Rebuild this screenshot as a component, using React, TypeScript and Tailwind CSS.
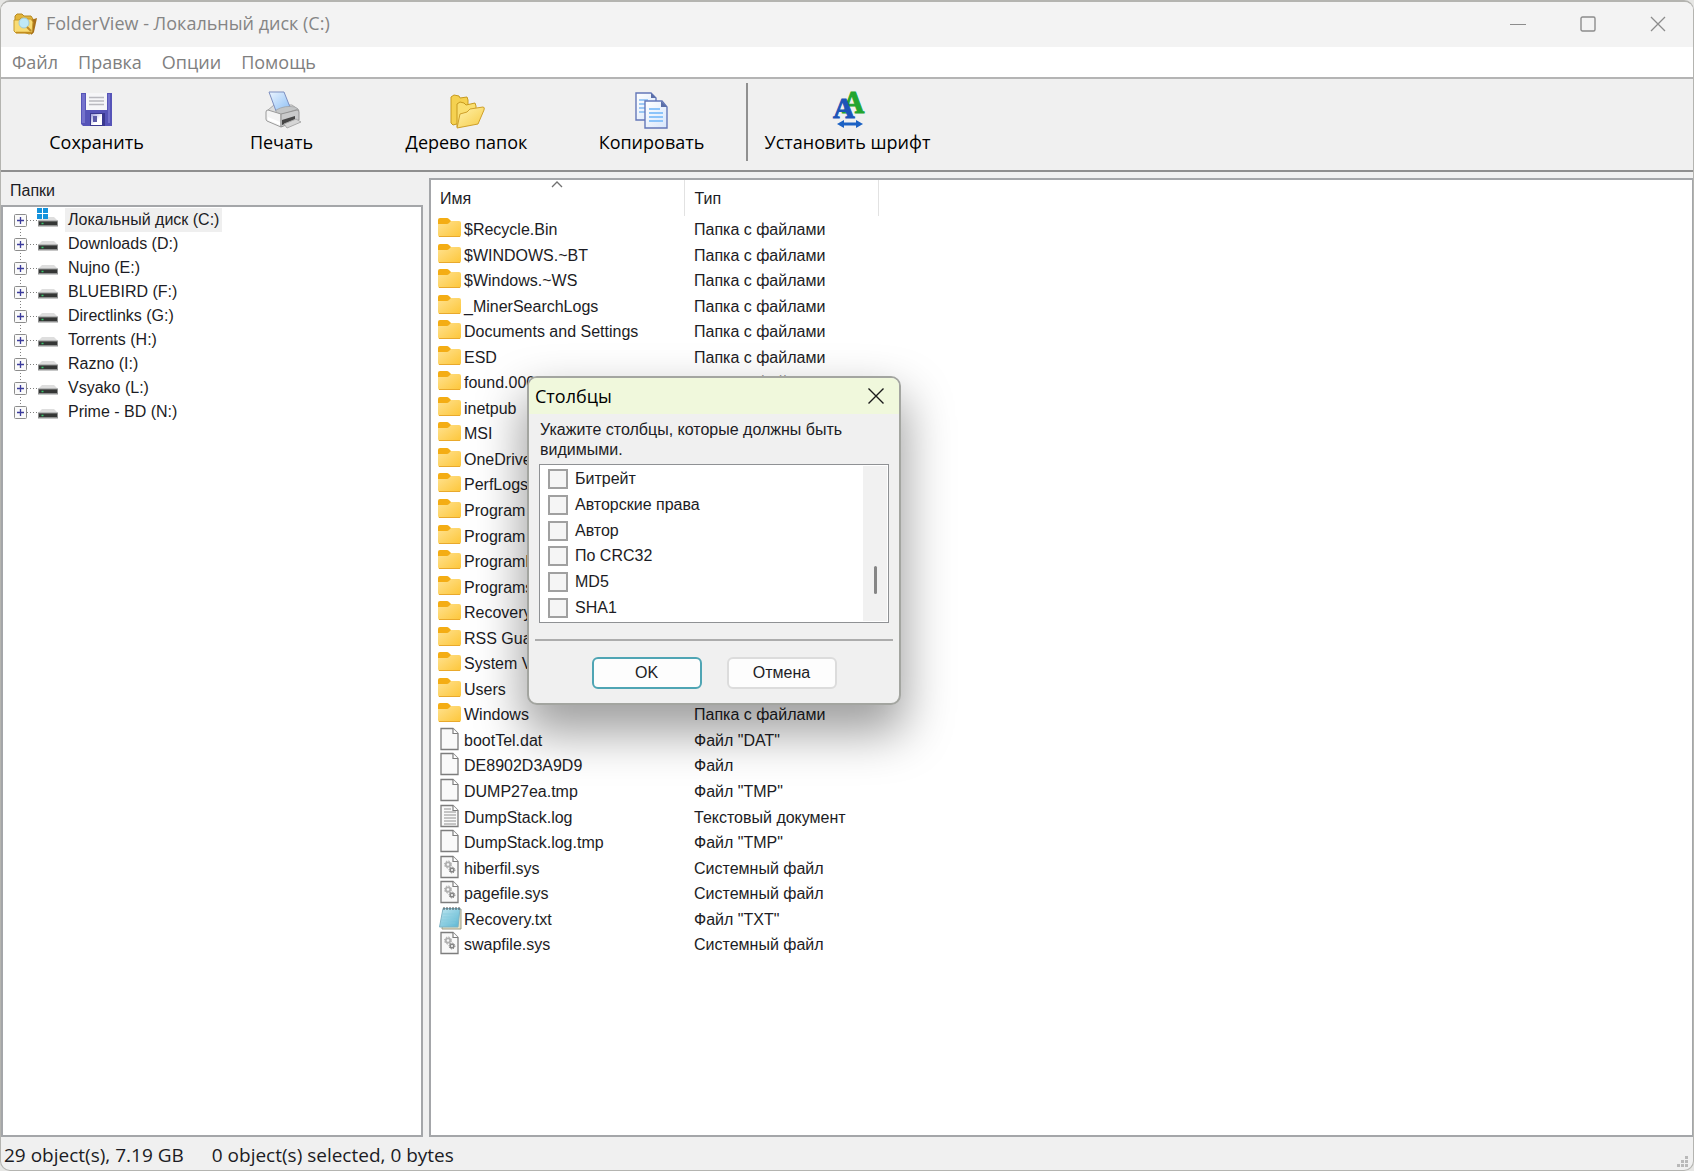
import type { ReactNode } from "react";

const drives = [
  "Локальный диск (C:)",
  "Downloads (D:)",
  "Nujno (E:)",
  "BLUEBIRD (F:)",
  "Directlinks (G:)",
  "Torrents (H:)",
  "Razno (I:)",
  "Vsyako (L:)",
  "Prime - BD (N:)",
];

type Kind = "folder" | "blank" | "log" | "sys" | "txt";

const FOLDER = "Папка с файлами";
const SYSTEM = "Системный файл";

const files: { name: string; type: string; kind: Kind }[] = [
  { name: "$Recycle.Bin", type: FOLDER, kind: "folder" },
  { name: "$WINDOWS.~BT", type: FOLDER, kind: "folder" },
  { name: "$Windows.~WS", type: FOLDER, kind: "folder" },
  { name: "_MinerSearchLogs", type: FOLDER, kind: "folder" },
  { name: "Documents and Settings", type: FOLDER, kind: "folder" },
  { name: "ESD", type: FOLDER, kind: "folder" },
  { name: "found.000", type: FOLDER, kind: "folder" },
  { name: "inetpub", type: FOLDER, kind: "folder" },
  { name: "MSI", type: FOLDER, kind: "folder" },
  { name: "OneDriveTemp", type: FOLDER, kind: "folder" },
  { name: "PerfLogs", type: FOLDER, kind: "folder" },
  { name: "Program Files", type: FOLDER, kind: "folder" },
  { name: "Program Files (x86)", type: FOLDER, kind: "folder" },
  { name: "ProgramData", type: FOLDER, kind: "folder" },
  { name: "Programs", type: FOLDER, kind: "folder" },
  { name: "Recovery", type: FOLDER, kind: "folder" },
  { name: "RSS Guard", type: FOLDER, kind: "folder" },
  { name: "System Volume Information", type: FOLDER, kind: "folder" },
  { name: "Users", type: FOLDER, kind: "folder" },
  { name: "Windows", type: FOLDER, kind: "folder" },
  { name: "bootTel.dat", type: 'Файл "DAT"', kind: "blank" },
  { name: "DE8902D3A9D9", type: "Файл", kind: "blank" },
  { name: "DUMP27ea.tmp", type: 'Файл "TMP"', kind: "blank" },
  { name: "DumpStack.log", type: "Текстовый документ", kind: "log" },
  { name: "DumpStack.log.tmp", type: 'Файл "TMP"', kind: "blank" },
  { name: "hiberfil.sys", type: SYSTEM, kind: "sys" },
  { name: "pagefile.sys", type: SYSTEM, kind: "sys" },
  { name: "Recovery.txt", type: 'Файл "TXT"', kind: "txt" },
  { name: "swapfile.sys", type: SYSTEM, kind: "sys" },
];

const columns = ["Битрейт", "Авторские права", "Автор", "По CRC32", "MD5", "SHA1"];

const FileIcon = ({ kind }: { kind: Kind }) => {
  if (kind === "folder") {
    return (
      <svg width="26" height="24" viewBox="0 0 26 24" className="shrink-0">
        <path d="M1 4q0-2 2-2h7q1 0 2 1l2 2v5H1z" fill="#f4ad14" />
        <path d="M1 8h9q1 0 2-1l2-2h8q2 0 2 2v12q0 2-2 2H3q-2 0-2-2z" fill="url(#folderFill)" />
        <path d="M2 20.500h21" stroke="#e9a92c" />
      </svg>
    );
  }
  if (kind === "txt") {
    return (
      <svg width="26" height="24" viewBox="0 0 26 24" className="shrink-0">
        <path d="M7 3h17v20H5z" fill="#e8e2c4" stroke="#9c9c88" />
        <path d="M6 2.500h17l-2 18.500H2.500z" fill="url(#noteFill)" stroke="#7fb3c4" />
        <path d="M6 8h14M5.500 11h14M5 14h14M4.500 17h14" stroke="#86cbdd" strokeWidth="0.700" />
        <path d="M7 1v3M10 1v3M13 1v3M16 1v3M19 1v3M22 1v3" stroke="#4d5558" />
      </svg>
    );
  }
  return (
    <svg width="26" height="24" viewBox="0 0 26 24" className="shrink-0">
      <path d="M4 1.500h12l5 5v16H4z" fill="#f9f9f9" stroke="#7d7d7d" strokeWidth="1.300" />
      <path d="M16 1.500v5h5" fill="#fff" stroke="#7d7d7d" strokeWidth="1.200" />
      {kind === "log" && (
        <path d="M7 5h7M7 8h12M7 11h12M7 14h12M7 17h12M7 20h12" stroke="#909090" />
      )}
      {kind === "sys" && (
        <g fill="none">
          <circle cx="11" cy="9.500" r="2.200" stroke="#b0b0b0" strokeWidth="1.800" />
          <circle cx="11" cy="9.500" r="3.500" stroke="#a0a0a0" strokeDasharray="1.400 1.350" />
          <circle cx="15" cy="15" r="1.800" stroke="#858585" strokeWidth="1.500" />
          <circle cx="15" cy="15" r="2.900" stroke="#808080" strokeDasharray="1.200 1.080" />
        </g>
      )}
    </svg>
  );
};

const DriveIcon = ({ system }: { system?: boolean }) => (
  <svg width="22" height="24" viewBox="0 0 22 24" className="shrink-0">
    <path d="M5 9h12l4 4H1z" fill="#dedede" />
    <path d="M1 12.500h20v6H1z" fill="#8f9090" />
    <path d="M2 13.500h18v3.500H2z" fill="#343635" />
    <path d="M4.500 15.500h2" stroke="#35c46a" strokeWidth="1.500" />
    {system && (
      <>
        <path d="M0 0h11v11H0z" fill="#fff" />
        <path d="M0 0h5v5H0zM6 0h5v5H6zM0 6h5v5H0zM6 6h5v5H6z" fill="#1492dc" />
      </>
    )}
  </svg>
);

const TreeToggle = ({ first, last }: { first: boolean; last: boolean }) => (
  <svg width="25" height="24" viewBox="0 0 25 24">
    <path
      d={`M8.500 ${first ? 12 : 0}V${last ? 12 : 24}`}
      stroke="#808080"
      strokeDasharray="1 2"
    />
    <path d="M15 12.500h10" stroke="#808080" strokeDasharray="1 2" />
    <rect x="2.500" y="6.500" width="12" height="12" rx="1" fill="#fafafa" stroke="#8c8c8c" />
    <path d="M5 12.500h7M8.500 9v7" stroke="#3c3c9c" strokeWidth="1.300" />
  </svg>
);

const SaveIcon = () => (
  <svg width="40" height="40" viewBox="0 0 40 40">
    <path d="M4 3h31v33H6l-2-2z" fill="#5654b8" />
    <path d="M5 4h3v29H5zM31 4h2v29h-2z" fill="#7472cc" />
    <path d="M9 3h21v17H9z" fill="#f6f6f8" />
    <path d="M12 7.500h15M12 11h15M12 14.500h15" stroke="#b9b9bf" strokeWidth="1.400" />
    <path d="M13 23h15v13H13z" fill="#3a3990" />
    <path d="M14 24h11v11H14z" fill="url(#shutterFill)" />
    <path d="M16 26h4v6h-4z" fill="#5b5aa8" />
  </svg>
);

const PrintIcon = () => (
  <svg width="40" height="40" viewBox="0 0 40 40" strokeLinejoin="round">
    <path d="M6 20l6-5h18l7 5-3 6-16 5-12-5z" fill="#dcdddd" stroke="#a9a9a9" />
    <path d="M7 2h15l6 15q-7 1-14 4z" fill="url(#paperFill)" stroke="#7d8fc0" />
    <path d="M14 20q9-5 19-3l3 2-17 6-5-2z" fill="#c3c5c6" stroke="#9c9e9f" strokeWidth="0.700" />
    <path d="M4 22q0-2 2-2l13 4v13L5 31q-1-1-1-2z" fill="#f4f4f4" stroke="#9a9a9a" />
    <path d="M19 24l16-4q2 0 2 2v8l-18 7z" fill="#c9cacb" stroke="#929292" />
    <path d="M6 27l12 5v3L6 30z" fill="#fff" />
    <path d="M20 30l13-4v4l-13 5z" fill="#454545" />
    <path d="M22 34l12-5 5 3-14 6z" fill="#d6d6d6" stroke="#aaa" />
  </svg>
);

const FoldersIcon = () => (
  <svg width="40" height="40" viewBox="0 0 40 40" strokeLinejoin="round">
    <path d="M4 33V7l3-2 5 1 1 2 7-1 1 3v21L6 35z" fill="#f5d150" stroke="#c79a1f" />
    <path d="M10 37V14l3-2 4 1 2 2 9-2 1 3v17z" fill="#fadf70" stroke="#c79a1f" />
    <path d="M10 38l3-14 7-2 3-3 13-2q2 0 1 3l-6 14z" fill="url(#openFill)" stroke="#cfa02a" />
  </svg>
);

const CopyIcon = () => (
  <svg width="40" height="40" viewBox="0 0 40 40">
    <path d="M4 3h15l5 5v22H4z" fill="url(#sheetFill)" stroke="#6377b8" strokeWidth="1.400" />
    <path d="M7 10h9M7 14h6M7 18h6M7 22h6" stroke="#82baf2" strokeWidth="1.500" />
    <path d="M19 3v5h5z" fill="#5b6fa8" />
    <path d="M13 11h17l5 6v21H13z" fill="url(#sheetFill)" stroke="#6377b8" strokeWidth="1.400" />
    <path d="M17 19h11M17 23h14M17 27h14M17 31h14" stroke="#8cc4fa" strokeWidth="1.800" />
    <path d="M29 11v6h6z" fill="#5b6fa8" />
  </svg>
);

const FontIcon = () => (
  <svg width="40" height="40" viewBox="0 0 40 40">
    <g fontFamily="Liberation Serif, serif" fontWeight="700" strokeWidth="1">
      <text x="14" y="23" fontSize="31" fill="#22a52e" stroke="#22a52e">A</text>
      <text x="5" y="28" fontSize="30" fill="#1d55b8" stroke="#1d55b8">A</text>
    </g>
    <path d="M9 34l7-4v2.500h12V30l7 4-7 4v-2.500H16V38z" fill="#1c62c4" />
  </svg>
);

const tools: { label: string; icon: ReactNode }[] = [
  { label: "Сохранить", icon: <SaveIcon /> },
  { label: "Печать", icon: <PrintIcon /> },
  { label: "Дерево папок", icon: <FoldersIcon /> },
  { label: "Копировать", icon: <CopyIcon /> },
];

const ToolButton = ({ label, icon }: { label: string; icon: ReactNode }) => (
  <button type="button" className="flex w-[185px] flex-col items-center pt-[7px]">
    {icon}
    <span className="text-[18px] leading-6 whitespace-nowrap">{label}</span>
  </button>
);

const Gradients = () => (
  <svg width="0" height="0" className="absolute">
    <defs>
      <linearGradient id="folderFill" x1="0" y1="0" x2="1" y2="1">
        <stop offset="0" stopColor="#ffe290" />
        <stop offset="1" stopColor="#fdc639" />
      </linearGradient>
      <linearGradient id="noteFill" x1="0" y1="0" x2="1" y2="1">
        <stop offset="0" stopColor="#bfe6f0" />
        <stop offset="1" stopColor="#5ab6d2" />
      </linearGradient>
      <linearGradient id="shutterFill" x1="0" y1="0" x2="1" y2="1">
        <stop offset="0" stopColor="#9a9ad8" />
        <stop offset="0.6" stopColor="#ffffff" />
      </linearGradient>
      <linearGradient id="paperFill" x1="0" y1="0" x2="1" y2="1">
        <stop offset="0" stopColor="#eaf4ff" />
        <stop offset="1" stopColor="#8fc0f5" />
      </linearGradient>
      <linearGradient id="openFill" x1="0" y1="0" x2="1" y2="1">
        <stop offset="0" stopColor="#fff3ae" />
        <stop offset="1" stopColor="#f6cb45" />
      </linearGradient>
      <linearGradient id="sheetFill" x1="0" y1="0" x2="1" y2="1">
        <stop offset="0" stopColor="#ffffff" />
        <stop offset="1" stopColor="#d7e6fb" />
      </linearGradient>
    </defs>
  </svg>
);

const ColumnsDialog = () => (
  <div
    role="dialog"
    aria-labelledby="columns-title"
    className="absolute top-[374px] left-[526px] flex w-[374px] flex-col overflow-hidden rounded-[10px] border-2 border-[#a3a5a0] bg-[#f0f0f0] shadow-[0_24px_48px_4px_rgba(0,0,0,0.38)]"
  >
    <div className="flex h-9 items-center justify-between bg-[#f0f8dc] pr-3.5 pl-1.5">
      <h2 id="columns-title" className="font-['Open_Sans',sans-serif] text-[18px] leading-6 text-black">
        Столбцы
      </h2>
      <button type="button" aria-label="Закрыть">
        <svg width="18" height="18" viewBox="0 0 18 18">
          <path d="M1.500 1.500l15 15M16.500 1.500l-15 15" stroke="#1a1a1a" strokeWidth="1.400" />
        </svg>
      </button>
    </div>

    <p className="px-[11px] pt-1.5 leading-5">Укажите столбцы, которые должны быть видимыми.</p>

    <div className="mx-[10px] mt-1 flex border border-[#8f9194] bg-white p-px">
      <ul className="grid h-[155px] flex-1 grid-rows-6 pl-[7px]">
        {columns.map((name) => (
          <li key={name} className="flex items-center">
            <label className="flex items-center gap-[7px]">
              <input
                type="checkbox"
                className="size-5 appearance-none border-2 border-[#a0a0a0] bg-[#f5f5f5]"
              />
              {name}
            </label>
          </li>
        ))}
      </ul>
      <div className="flex w-6 justify-center bg-[#f1f1f1] pt-[100px]">
        <span className="h-7 w-[3px] rounded-full bg-[#868686]" />
      </div>
    </div>

    <div className="mx-1.5 mt-4 border-t-2 border-[#acacac]" />

    <div className="flex justify-center gap-[25px] pt-4 pb-[14px]">
      <button type="button" className="h-8 w-[110px] rounded-md border-2 border-[#4fa5b4] bg-[#fdfdfd]">
        OK
      </button>
      <button type="button" className="h-8 w-[110px] rounded-md border-2 border-[#dcdcdc] bg-[#fdfdfd]">
        Отмена
      </button>
    </div>
  </div>
);

export default function App() {
  return (
    <div className="bg-[#e6e6e4] font-['Liberation_Sans',Arial,sans-serif] text-[16px] text-[#1c1c24]">
      <Gradients />
      <div className="relative flex min-h-screen flex-col overflow-hidden rounded-[10px] border border-t-2 border-[#b4b4b0] bg-[#f0f0f0]">
        {/* Title bar */}
        <header className="flex h-[45px] items-center bg-[#f3f3f3] pb-0.5 pl-3 font-['Open_Sans',sans-serif]">
          <svg width="25" height="24" viewBox="0 0 25 24" strokeLinejoin="round">
            <path d="M2 17V4l2-2h5l2 2h7l2 3v14l-4 1z" fill="#e3b53a" stroke="#b58a24" />
            <path d="M18 8l6-2-3 14-3 3z" fill="#a8701a" />
            <path d="M1 8h5l2-2 5 1h5l2 3-1 10-2 1H3l-2-2z" fill="#f9dc74" stroke="#c79a2c" />
            <circle cx="11" cy="11" r="5" fill="#bfe9f8" stroke="#a2cbd6" />
            <path d="M14 15l4 4" stroke="#c08b28" strokeWidth="2" />
            <path d="M3 20.500h15" stroke="#c38d1e" strokeWidth="1.500" />
          </svg>
          <h1 className="ml-2 flex-1 text-[18px] text-[#858585]">FolderView - Локальный диск (C:)</h1>
          <button type="button" aria-label="Свернуть" className="grid w-[70px] place-items-center">
            <svg width="16" height="16" viewBox="0 0 16 16">
              <path d="M0 8.500h16" stroke="#8c8c8c" />
            </svg>
          </button>
          <button type="button" aria-label="Развернуть" className="grid w-[70px] place-items-center">
            <svg width="16" height="16" viewBox="0 0 16 16">
              <rect x="1" y="1" width="14" height="14" rx="1.500" fill="none" stroke="#8c8c8c" strokeWidth="1.400" />
            </svg>
          </button>
          <button type="button" aria-label="Закрыть окно" className="grid w-[70px] place-items-center">
            <svg width="16" height="16" viewBox="0 0 16 16">
              <path d="M1 1l14 14M15 1L1 15" stroke="#8c8c8c" strokeWidth="1.300" />
            </svg>
          </button>
        </header>

        {/* Menu */}
        <nav className="flex h-[30px] items-center gap-5 bg-white pl-[11px] font-['Open_Sans',sans-serif] text-[18px] text-[#808080]">
          <button type="button">Файл</button>
          <button type="button">Правка</button>
          <button type="button">Опции</button>
          <button type="button">Помощь</button>
        </nav>

        {/* Toolbar */}
        <div className="flex h-[95px] border-y-2 border-t-[#b4b4b4] border-b-[#8f8f8f] pt-1 pl-[3px] font-['Open_Sans',sans-serif] text-black">
          {tools.map((tool) => (
            <ToolButton key={tool.label} label={tool.label} icon={tool.icon} />
          ))}
          <div className="mr-[7px] ml-[2px] h-[78px] w-0.5 bg-[#909090]" />
          <ToolButton label="Установить шрифт" icon={<FontIcon />} />
        </div>

        {/* Panels */}
        <main className="flex flex-1 gap-1.5 pt-1.5">
          <section className="flex w-[422px] shrink-0 flex-col">
            <h2 className="h-[27px] pt-px pl-[9px] leading-6">Папки</h2>
            <div className="flex-1 border-2 border-[#a4a6a9] bg-white pt-px">
              <ul>
                {drives.map((name, i) => (
                  <li key={name} className="flex h-6 items-center pl-[9px]">
                    <button type="button" aria-label={`Раскрыть ${name}`}>
                      <TreeToggle first={i === 0} last={i === drives.length - 1} />
                    </button>
                    <DriveIcon system={i === 0} />
                    <span className={i === 0 ? "ml-1.5 bg-[#efefef] px-[3px] leading-6" : "ml-1.5 px-[3px] leading-6"}>
                      {name}
                    </span>
                  </li>
                ))}
              </ul>
            </div>
          </section>

          <section className="flex-1 border-2 border-r border-[#a4a6a9] bg-white">
            <table className="h-[777px] table-fixed border-collapse text-left">
              <colgroup>
                <col className="w-[253px]" />
                <col className="w-[194px]" />
              </colgroup>
              <thead>
                <tr className="h-9">
                  <th className="border-r border-[#e2e2e2] p-0 align-top font-normal">
                    <div className="flex h-[9px] justify-center pt-px">
                      <svg width="12" height="7" viewBox="0 0 12 7">
                        <path d="M1 6l5-5 5 5" fill="none" stroke="#707070" strokeWidth="1.300" />
                      </svg>
                    </div>
                    <span className="block pl-[9px] leading-5">Имя</span>
                  </th>
                  <th className="border-r border-[#e2e2e2] p-0 pt-[9px] pl-[10px] align-top leading-5 font-normal">Тип</th>
                </tr>
              </thead>
              <tbody>
                {files.map((file) => (
                  <tr key={file.name}>
                    <td className="p-0 align-top">
                      <div className="flex pl-1.5">
                        <FileIcon kind={file.kind} />
                        <span className="ml-px pt-1 leading-5 whitespace-nowrap">{file.name}</span>
                      </div>
                    </td>
                    <td className="p-0 pt-1 pl-[10px] align-top leading-5 whitespace-nowrap">{file.type}</td>
                  </tr>
                ))}
              </tbody>
            </table>
          </section>
        </main>

        {/* Status bar */}
        <footer className="flex h-[33px] items-center justify-between pl-[3px] font-['Open_Sans',sans-serif] text-[19px]">
          <p className="flex gap-[28px] pt-1">
            <span>29 object(s), 7.19 GB</span>
            <span>0 object(s) selected, 0 bytes</span>
          </p>
          <svg width="16" height="16" viewBox="0 0 16 16" className="self-end">
            <path d="M8 2h3v3H8zM4 6h3v3H4zM8 6h3v3H8zM0 10h3v3H0zM4 10h3v3H4zM8 10h3v3H8z" fill="#b9b9b9" />
          </svg>
        </footer>

        <ColumnsDialog />
      </div>
    </div>
  );
}
